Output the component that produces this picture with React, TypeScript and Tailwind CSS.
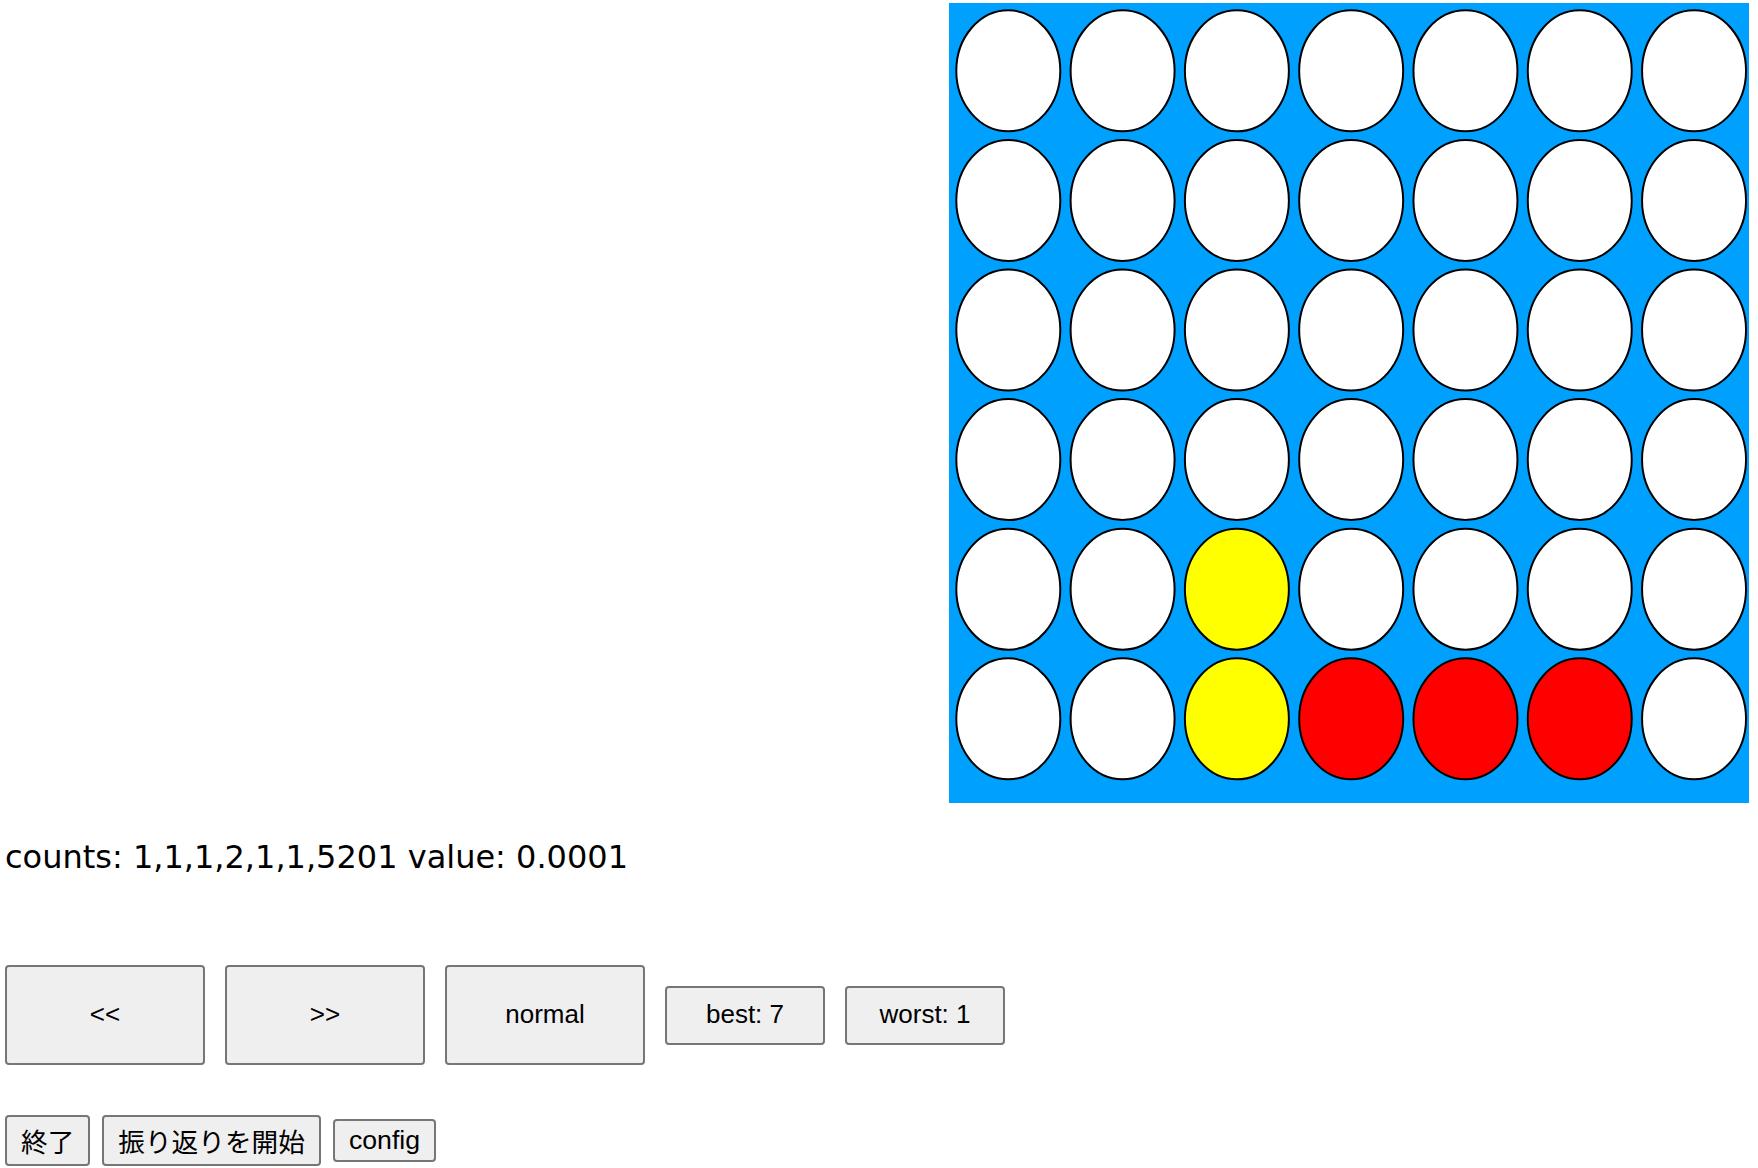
import React from 'react';

type Cell = 'empty' | 'red' | 'yellow';

const ROWS = 6;
const COLS = 7;

const board: Cell[][] = Array.from({ length: ROWS }, () =>
  Array.from({ length: COLS }, () => 'empty' as Cell)
);
board[4][2] = 'yellow';
board[5][2] = 'yellow';
board[5][3] = 'red';
board[5][4] = 'red';
board[5][5] = 'red';

const fillFor = (c: Cell) => (c === 'red' ? '#ff0000' : c === 'yellow' ? '#ffff00' : '#ffffff');

const Board: React.FC = () => (
  <svg width={800} height={800} viewBox="0 0 800 800" className="block">
    <rect x={0} y={0} width={800} height={800} fill="#00a0ff" />
    {board.map((row, r) =>
      row.map((cell, c) => (
        <ellipse
          key={`${r}-${c}`}
          cx={59.3 + 114.29 * c}
          cy={67.8 + 129.6 * r}
          rx={52}
          ry={60.5}
          fill={fillFor(cell)}
          stroke="#000"
          strokeWidth={2}
        />
      ))
    )}
  </svg>
);

const btn =
  "bg-[#efefef] border-2 border-[#767676] rounded-[4px] text-black font-['Liberation_Sans','Noto_Sans_CJK_JP',sans-serif]";

const App: React.FC = () => {
  return (
    <div className="w-full bg-white">
      <div className="flex justify-end pt-[3px] pr-[9px]">
        <Board />
      </div>

      <p className="mt-[36px] pl-[5px] text-[32px] leading-[37px] text-black font-['DejaVu_Sans',sans-serif]">
        counts: 1,1,1,2,1,1,5201 value: 0.0001
      </p>

      <div className="mt-[89px] pl-[5px] flex items-center gap-5 text-[26px] leading-[1.15]">
        <button className={`${btn} w-[200px] h-[100px]`}>&lt;&lt;</button>
        <button className={`${btn} w-[200px] h-[100px]`}>&gt;&gt;</button>
        <button className={`${btn} w-[200px] h-[100px]`}>normal</button>
        <button className={`${btn} w-[160px] h-[59px]`}>best: 7</button>
        <button className={`${btn} w-[160px] h-[59px]`}>worst: 1</button>
      </div>

      <div className="mt-[50px] pl-[5px] flex items-center gap-3 text-[26.67px] leading-[normal]">
        <button className={`${btn} px-[14px] py-1`}>終了</button>
        <button className={`${btn} px-[14px] py-1`}>振り返りを開始</button>
        <button className={`${btn} px-[14px] py-1`}>config</button>
      </div>
    </div>
  );
};

export default App;
